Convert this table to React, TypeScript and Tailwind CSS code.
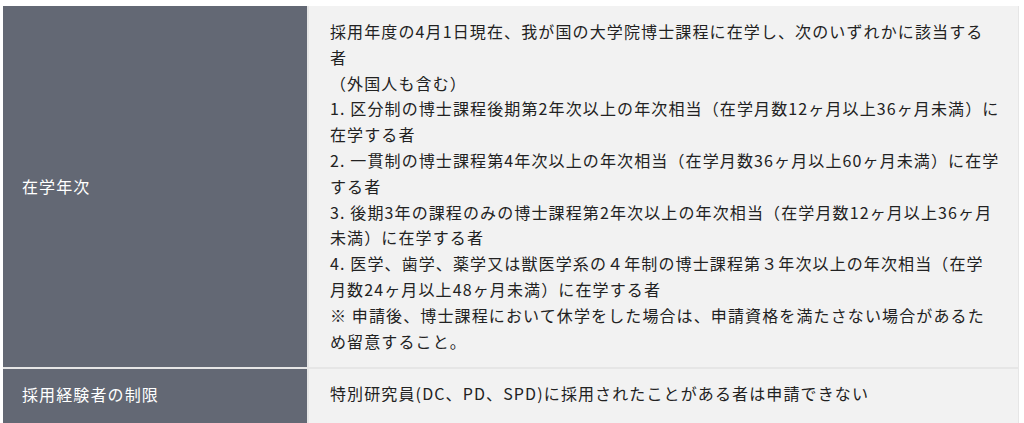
import React from "react";

const font = { fontFamily: '"Noto Sans CJK JP", "Noto Sans", sans-serif' };

export default function App() {
  const lines = [
    "採用年度の4月1日現在、我が国の大学院博士課程に在学し、次のいずれかに該当する",
    "者",
    "（外国人も含む）",
    "1. 区分制の博士課程後期第2年次以上の年次相当（在学月数12ヶ月以上36ヶ月未満）に",
    "在学する者",
    "2. 一貫制の博士課程第4年次以上の年次相当（在学月数36ヶ月以上60ヶ月未満）に在学",
    "する者",
    "3. 後期3年の課程のみの博士課程第2年次以上の年次相当（在学月数12ヶ月以上36ヶ月",
    "未満）に在学する者",
    "4. 医学、歯学、薬学又は獣医学系の４年制の博士課程第３年次以上の年次相当（在学",
    "月数24ヶ月以上48ヶ月未満）に在学する者",
    "※ 申請後、博士課程において休学をした場合は、申請資格を満たさない場合があるた",
    "め留意すること。",
  ];
  return (
    <div className="w-[1024px] h-[423px] overflow-hidden bg-white pt-[6px] pl-[3px] pr-[5px]" style={font}>
      <div className="flex flex-col gap-[2px] bg-[#e6e6e6] border-r border-[#e6e6e6] text-[16px] leading-[25.8px] tracking-[0.07em]">
        <div className="flex gap-[2px]">
          <div className="w-[304px] shrink-0 bg-[#636874] text-white flex items-center px-[19px]">在学年次</div>
          <div className="flex-1 bg-[#f2f2f2] text-[#222] pl-[21px] pr-[12px] pt-[13px] pb-[13px]">
            {lines.map((l, i) => (
              <div key={i} className="whitespace-nowrap">{l}</div>
            ))}
          </div>
        </div>
        <div className="flex gap-[2px]">
          <div className="w-[304px] shrink-0 bg-[#636874] text-white flex items-center px-[19px] pb-[4px]">採用経験者の制限</div>
          <div className="flex-1 bg-[#f2f2f2] text-[#222] pl-[21px] pr-[12px] pt-[12px] pb-[18px]">
            特別研究員(DC、PD、SPD)に採用されたことがある者は申請できない
          </div>
        </div>
      </div>
    </div>
  );
}
